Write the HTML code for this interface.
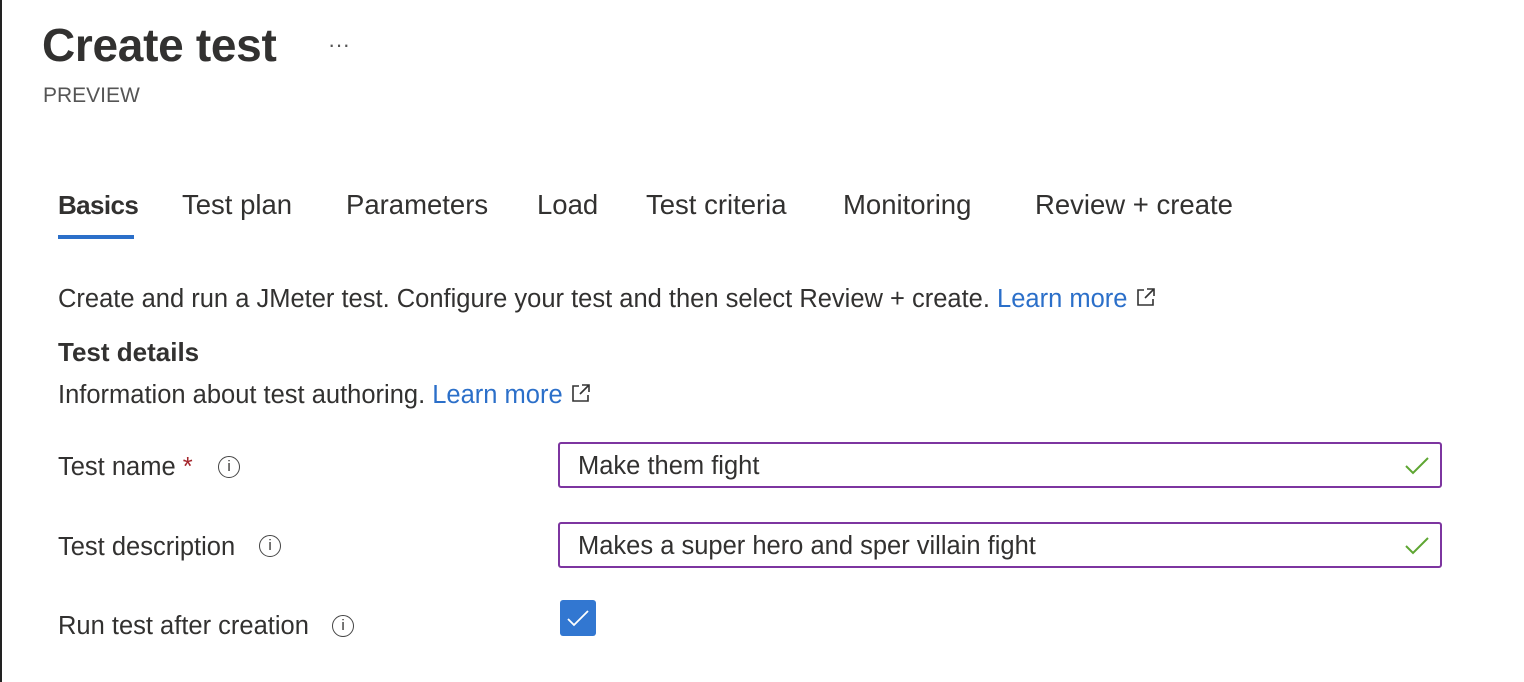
<!DOCTYPE html>
<html><head><style>
body{margin:0;width:1524px;height:682px;background:#fff;font-family:"Liberation Sans",sans-serif;color:#323130;position:relative;overflow:hidden}
.a{position:absolute;white-space:nowrap}
.lb{position:absolute;left:0;top:0;width:2px;height:682px;background:#222}
h1{position:absolute;left:42px;top:18px;margin:0;font-size:46px;font-weight:bold;letter-spacing:-0.3px}
.tab{position:absolute;top:189px;font-size:27.5px}
.t{font-size:25.5px}
.link{color:#2b6fc9}
.inp{position:absolute;left:558px;width:884px;height:46px;border:2px solid #7d35a0;border-radius:3px;box-sizing:border-box}
.inp span{position:absolute;left:18px;top:8px;font-size:25.5px}
.info{position:absolute;width:22px;height:22px;border:1.5px solid #444;border-radius:50%;box-sizing:border-box;font-size:15px;text-align:center;line-height:20px}
</style></head><body>
<div class="lb"></div>
<h1>Create test</h1>
<div class="a" style="left:328px;top:32px;font-size:22px;color:#555">···</div>
<div class="a" style="left:43px;top:84px;font-size:21px;color:#555">PREVIEW</div>
<div class="tab a" style="left:58px;font-weight:bold;font-size:26px;letter-spacing:-0.6px;top:190px">Basics</div>
<div class="a" style="left:58px;top:235px;width:76px;height:4px;background:#2b6fc9"></div>
<div class="tab a" style="left:182px">Test plan</div>
<div class="tab a" style="left:346px">Parameters</div>
<div class="tab a" style="left:537px">Load</div>
<div class="tab a" style="left:646px">Test criteria</div>
<div class="tab a" style="left:843px">Monitoring</div>
<div class="tab a" style="left:1035px">Review + create</div>
<div class="a t" style="left:58px;top:285px">Create and run a JMeter test. Configure your test and then select Review + create. <span class="link">Learn more</span>
<svg width="22" height="22" viewBox="0 0 22 22" style="vertical-align:-1px"><path d="M9 4H3v15h15v-6M12 3h7v7M19 3l-9 9" fill="none" stroke="#333" stroke-width="1.6"/></svg></div>
<div class="a" style="left:58px;top:337px;font-size:26px;font-weight:bold">Test details</div>
<div class="a t" style="left:58px;top:381px">Information about test authoring. <span class="link">Learn more</span>
<svg width="22" height="22" viewBox="0 0 22 22" style="vertical-align:-1px"><path d="M9 4H3v15h15v-6M12 3h7v7M19 3l-9 9" fill="none" stroke="#333" stroke-width="1.6"/></svg></div>
<div class="a t" style="left:58px;top:453px">Test name <span style="color:#a4262c">*</span></div>
<div class="info" style="left:218px;top:456px">i</div>
<div class="a t" style="left:58px;top:533px">Test description</div>
<div class="info" style="left:259px;top:535px">i</div>
<div class="a t" style="left:58px;top:612px">Run test after creation</div>
<div class="info" style="left:332px;top:615px">i</div>
<div class="inp" style="top:442px"><span>Make them fight</span>
<svg style="position:absolute;right:10px;top:12px" width="26" height="20" viewBox="0 0 26 20"><path d="M2 10l7 7L24 2" fill="none" stroke="#5ea632" stroke-width="2"/></svg></div>
<div class="inp" style="top:522px"><span>Makes a super hero and sper villain fight</span>
<svg style="position:absolute;right:10px;top:12px" width="26" height="20" viewBox="0 0 26 20"><path d="M2 10l7 7L24 2" fill="none" stroke="#5ea632" stroke-width="2"/></svg></div>
<div class="a" style="left:560px;top:600px;width:36px;height:36px;background:#3277d1;border-radius:3px">
<svg width="36" height="36" viewBox="0 0 36 36"><path d="M8 19l6 6L28 11" fill="none" stroke="#fff" stroke-width="1.8"/></svg></div>
</body></html>
